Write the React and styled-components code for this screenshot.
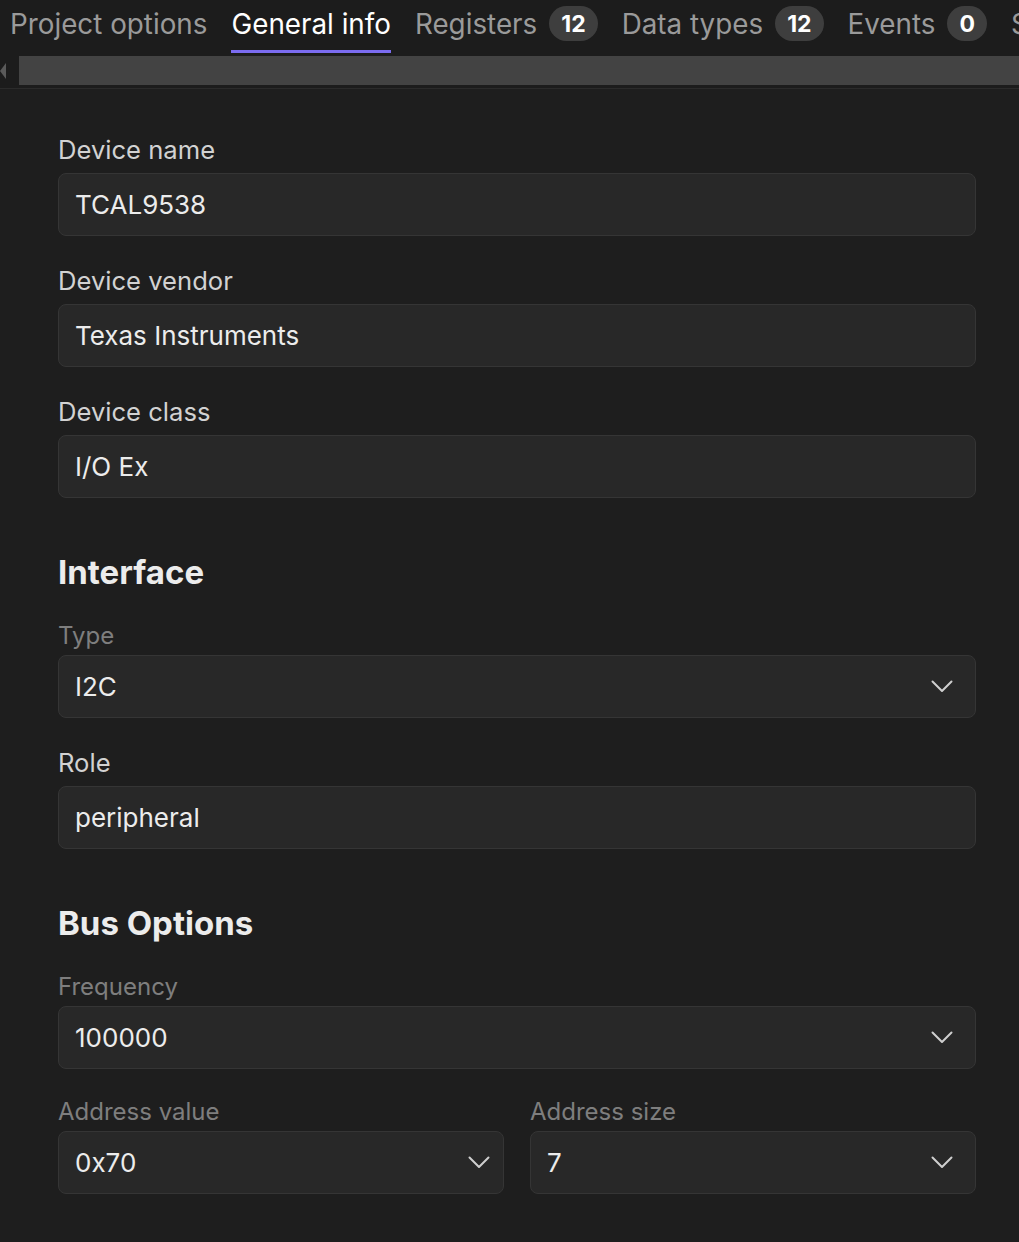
import React from "react";
import styled, { createGlobalStyle } from "styled-components";

const GlobalStyle = createGlobalStyle`
  html, body {
    margin: 0;
    padding: 0;
    background: #1e1e1e;
  }
  body {
    font-family: Inter, "Noto Sans", sans-serif;
    color: #e6e6e6;
  }
  * { box-sizing: border-box; }
`;

const Page = styled.div`
  width: 1019px;
  min-height: 1242px;
  background: #1e1e1e;
  overflow: hidden;
`;

const TabBar = styled.div`
  display: flex;
  align-items: flex-start;
  gap: 24px;
  height: 56px;
  padding-left: 10px;
  background: #1c1c1c;
  white-space: nowrap;
  overflow: hidden;
`;

const Tab = styled.div`
  display: flex;
  align-items: center;
  gap: 12px;
  height: 53px;
  padding-bottom: 3px;
  border-bottom: 3px solid ${(p) => (p.$active ? "#7b6cf0" : "transparent")};
  font-size: 27.8px;
  color: ${(p) => (p.$active ? "#ffffff" : "#9a9a9a")};
  flex-shrink: 0;
`;

const Badge = styled.span`
  display: inline-flex;
  align-items: center;
  justify-content: center;
  min-width: 38px;
  height: 35px;
  padding: 0 12px;
  border-radius: 18px;
  background: #3e3e3e;
  color: #ffffff;
  font-size: 23px;
  font-weight: 700;
`;

const ScrollStrip = styled.div`
  display: flex;
  height: 33px;
  padding-bottom: 3px;
  background: #1c1c1c;
  border-bottom: 1px solid #2b2b2b;
`;

const ScrollArrow = styled.div`
  width: 19px;
  display: flex;
  align-items: center;
  &::before {
    content: "";
    border-top: 8px solid transparent;
    border-bottom: 8px solid transparent;
    border-right: 6px solid #5a5a5a;
  }
`;

const ScrollThumb = styled.div`
  flex: 1;
  background: #434343;
`;

const Form = styled.div`
  padding: 45px 43px 40px 58px;
`;

const Field = styled.div`
  display: flex;
  flex-direction: column;
  gap: ${(p) => (p.$dim ? 5 : 7)}px;
  margin-bottom: 29px;
  min-width: 0;
`;

const Label = styled.label`
  font-size: ${(p) => (p.$dim ? 24 : 25.6)}px;
  line-height: ${(p) => (p.$dim ? 28 : 32)}px;
  color: ${(p) => (p.$dim ? "#7e7e7e" : "#d2d2d2")};
`;

const Box = styled.div`
  display: flex;
  align-items: center;
  justify-content: space-between;
  height: 63px;
  padding: 0 ${(p) => p.$inset || 22}px 0 16px;
  background: #282828;
  border: 1px solid #353535;
  border-radius: 8px;
  font-size: 26px;
  color: #ececec;
`;

const Heading = styled.h2`
  margin: 54px 0 30px;
  font-size: 33px;
  line-height: 40px;
  font-weight: 700;
  color: #ececec;
`;

const Row = styled.div`
  display: grid;
  grid-template-columns: 1fr 1fr;
  gap: 26px;
`;

const Chevron = () => (
  <svg width="22" height="13" viewBox="0 0 22 13" fill="none">
    <polyline
      points="1.5,1.5 11,11 20.5,1.5"
      stroke="#cfcfcf"
      strokeWidth="2"
      strokeLinecap="round"
      strokeLinejoin="round"
    />
  </svg>
);

const TextField = ({ label, value, dim }) => (
  <Field $dim={dim}>
    <Label $dim={dim}>{label}</Label>
    <Box>{value}</Box>
  </Field>
);

const SelectField = ({ label, value, dim, inset }) => (
  <Field $dim={dim}>
    <Label $dim={dim}>{label}</Label>
    <Box $inset={inset}>
      <span>{value}</span>
      <Chevron />
    </Box>
  </Field>
);

const tabs = [
  { name: "Project options" },
  { name: "General info", active: true },
  { name: "Registers", count: 12 },
  { name: "Data types", count: 12 },
  { name: "Events", count: 0 },
  { name: "Settings" },
];

export default function App() {
  return (
    <Page>
      <GlobalStyle />
      <TabBar>
        {tabs.map((t) => (
          <Tab key={t.name} $active={t.active}>
            {t.name}
            {t.count !== undefined && <Badge>{t.count}</Badge>}
          </Tab>
        ))}
      </TabBar>
      <ScrollStrip>
        <ScrollArrow />
        <ScrollThumb />
      </ScrollStrip>
      <Form>
        <TextField label="Device name" value="TCAL9538" />
        <TextField label="Device vendor" value="Texas Instruments" />
        <TextField label="Device class" value="I/O Ex" />

        <Heading>Interface</Heading>
        <SelectField label="Type" value="I2C" dim />
        <TextField label="Role" value="peripheral" />

        <Heading>Bus Options</Heading>
        <SelectField label="Frequency" value="100000" dim />
        <Row>
          <SelectField label="Address value" value="0x70" dim inset={13} />
          <SelectField label="Address size" value="7" dim />
        </Row>
      </Form>
    </Page>
  );
}
